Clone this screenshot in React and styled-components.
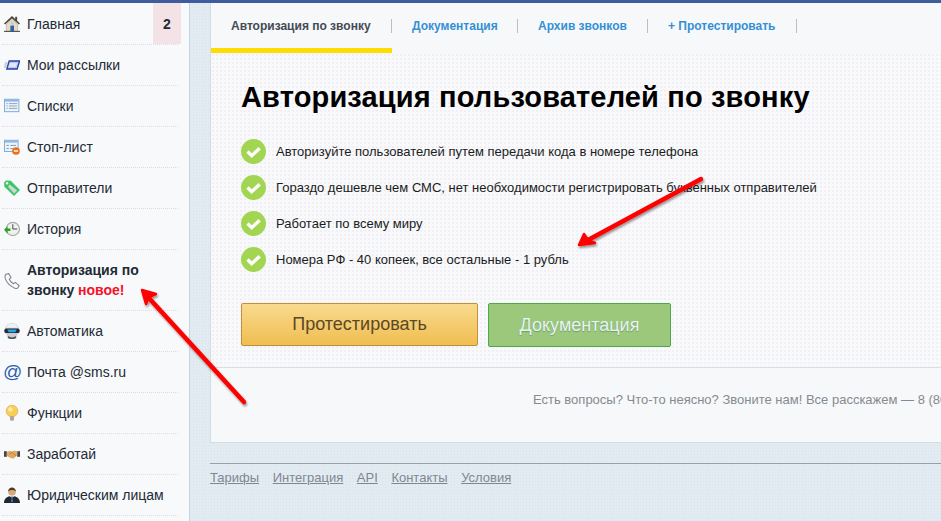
import React from "react";
import styled, { createGlobalStyle } from "styled-components";

const Global = createGlobalStyle`
  html, body { margin: 0; padding: 0; height: 100%; overflow: hidden; }
  body { font-family: "Liberation Sans", Arial, sans-serif; background: #e2eaf1; }
  #root { height: 100%; }
`;

const Page = styled.div`
  position: relative;
  width: 941px;
  height: 521px;
  overflow: hidden;
  border-top: 3px solid #3f5c9e;
  box-sizing: border-box;
  display: flex;
  background-color: #e3ebf2;
  background-image: radial-gradient(#d8e4ed 0.6px, transparent 0.7px);
  background-size: 3px 3px;
`;

const Sidebar = styled.nav`
  width: 190px;
  flex: none;
  box-sizing: border-box;
  padding: 1px 0 0 2px;
  background: #f8f9fb;
  border-right: 1px solid #c6d6e2;
`;

const MenuList = styled.ul`
  list-style: none;
  margin: 0;
  padding: 0;
  width: 176px;
`;

const MenuRow = styled.li`
  display: flex;
  align-items: ${(p) => (p.$tall ? "flex-start" : "center")};
  height: ${(p) => (p.$tall ? "60px" : "40px")};
  border-bottom: 1px dotted #e6d8ea;
  color: #222a35;
  font-size: 14px;
`;

const IconSlot = styled.span`
  width: 23px;
  padding-left: 2px;
  flex: none;
  display: flex;
  justify-content: flex-start;
  margin-top: ${(p) => (p.$tall ? "23px" : "0")};
`;

const AtGlyph = styled.span`
  color: #2a5fb0;
  font-size: 19px;
  line-height: 16px;
  margin-left: -1px;
`;

const Label = styled.span`
  line-height: 20px;
  font-weight: ${(p) => (p.$bold ? 700 : 400)};
  margin-top: ${(p) => (p.$bold ? "10px" : "0")};
`;

const NewMark = styled.span`
  color: #f5102a;
`;

const Badge = styled.span`
  margin-left: auto;
  width: 28px;
  height: 41px;
  margin-right: -3px;
  margin-top: -1px;
  align-self: flex-start;
  display: flex;
  align-items: center;
  justify-content: center;
  background: #f4e3e6;
  font-weight: 700;
  font-size: 14px;
`;

const Main = styled.main`
  flex: 1;
  min-width: 0;
  padding-left: 20px;
`;

const Panel = styled.section`
  height: 440px;
  box-sizing: border-box;
  background: #f7f8fa;
  border-left: 1px solid #d4dce3;
  border-bottom: 1px solid #d4dce3;
  display: flex;
  flex-direction: column;
`;

const Tabs = styled.div`
  height: 50px;
  flex: none;
  display: flex;
  align-items: flex-start;
  background: #f7f8fa;
`;

const Tab = styled.a`
  height: ${(p) => (p.$active ? "50px" : "45px")};
  box-sizing: border-box;
  padding: 16px 0 0 20px;
  width: ${(p) => p.$w}px;
  flex: none;
  font-size: 12px;
  line-height: 15px;
  font-weight: 700;
  color: ${(p) => (p.$active ? "#444b55" : "#3490d6")};
  border-bottom: ${(p) => (p.$active ? "5px solid #ffdc00" : "0")};
  position: relative;
  &::after {
    content: "";
    position: absolute;
    right: 0;
    top: 16px;
    height: 14px;
    width: 1px;
    background: #b9bfc4;
  }
`;

const Hero = styled.div`
  height: 315px;
  flex: none;
  box-sizing: border-box;
  padding: 24px 0 0 30px;
  border-bottom: 1px solid #dadfe3;
  background-color: #f8f9fb;
  background-image: radial-gradient(#f3edf3 0.7px, transparent 0.8px);
  background-size: 4px 4px;
`;

const Title = styled.h1`
  margin: 0;
  font-size: 29px;
  line-height: 40px;
  font-weight: 700;
  color: #000;
  letter-spacing: 0.15px;
  white-space: nowrap;
`;

const Points = styled.ul`
  list-style: none;
  margin: 22px 0 0;
  padding: 0;
  display: flex;
  flex-direction: column;
  gap: 11px;
`;

const Point = styled.li`
  display: flex;
  align-items: center;
  gap: 10px;
  height: 25px;
  font-size: 13px;
  color: #1a1d22;
  white-space: nowrap;
`;

const Buttons = styled.div`
  display: flex;
  gap: 10px;
  margin-top: 31px;
  align-items: flex-start;
`;

const Button = styled.a`
  box-sizing: border-box;
  width: ${(p) => p.$w}px;
  height: ${(p) => p.$h}px;
  display: flex;
  align-items: center;
  justify-content: center;
  font-size: 18px;
  border-radius: 2px;
`;

const OrangeButton = styled(Button)`
  color: #5c4824;
  background: linear-gradient(#f8da8f, #f0be50);
  border: 1px solid #c0903a;
`;

const GreenButton = styled(Button)`
  color: #e6f2f2;
  text-shadow: 0 1px 1px #6f9a6a;
  background: #9cc87c;
  border: 1px solid #4da94e;
`;

const Contact = styled.p`
  margin: 0;
  padding: 24px 0 0 322px;
  font-size: 13px;
  line-height: 15px;
  color: #858b90;
  white-space: nowrap;
`;

const Footer = styled.footer`
  margin-top: 20px;
  border-top: 1px solid #97a0a6;
  padding-top: 6px;
  display: flex;
  gap: 13.6px;
  font-size: 13px;
  line-height: 15px;
`;

const FootLink = styled.a`
  color: #7f8790;
  text-decoration: underline;
`;

const Arrows = styled.svg`
  position: absolute;
  left: 0;
  top: -3px;
  pointer-events: none;
`;

const Check = () => (
  <svg width="25" height="25" viewBox="0 0 25 25">
    <circle cx="12.5" cy="12.5" r="12.5" fill="#a2d552" />
    <path d="M6.5 12.5l4.2 4.2 8-7.5" fill="none" stroke="#fff" strokeWidth="3.4" />
  </svg>
);

const Ico = ({ children }) => (
  <svg width="16" height="16" viewBox="0 0 20 20">{children}</svg>
);

const HomeIcon = () => (
  <Ico>
    <path d="M10 0L0 9.5l1.4 1.2L10 3l8.600 7.700 1.400-1.200z" fill="#4f4338" />
    <rect x="14" y="1" width="2.400" height="5" fill="#4f4338" />
    <path d="M3 10.500L10 4.500l7 6v8.500H3z" fill="#e8dcc0" stroke="#8a8070" strokeWidth=".5" />
    <rect x="8" y="12" width="4.500" height="7" fill="#2a62b5" />
    <rect x="8.600" y="8" width="3.200" height="2.600" fill="#a8c8e8" />
    <rect x="0" y="18.600" width="20" height="1.400" fill="#555" />
  </Ico>
);

const MailIcon = () => (
  <Ico>
    <path d="M6.500 5h13l-3 10H3.500z" fill="#b8c8ea" stroke="#2a3fa8" strokeWidth="1.600" />
    <path d="M7.500 7.500h9l-1.800 5H5.800z" fill="#dfe7f6" />
    <path d="M1 7.500h3.500M0.500 10h3M0 12.500h2.500" stroke="#8f9db0" strokeWidth="1.100" />
  </Ico>
);

const ListIcon = () => (
  <Ico>
    <rect x="0.600" y="1.600" width="18" height="15.500" fill="#eef4fb" stroke="#7fa8d8" strokeWidth="1.200" />
    <rect x="1" y="2" width="17" height="2.500" fill="#8db7e6" />
    <path d="M3 7h1.500M3 10h1.500M3 13h1.500" stroke="#6f93c0" strokeWidth="1.200" />
    <path d="M6 7h10.500M6 10h10.500M6 13h10.500" stroke="#8aa0b8" strokeWidth="1.200" />
  </Ico>
);

const StopIcon = () => (
  <Ico>
    <rect x="0.600" y="1.600" width="17" height="14" fill="#eef4fb" stroke="#7fa8d8" strokeWidth="1.200" />
    <rect x="1" y="2" width="16" height="2.500" fill="#8db7e6" />
    <path d="M3 8h3M3 12h3M8 8h7M8 12h3" stroke="#7f93a8" strokeWidth="1.200" />
    <circle cx="15" cy="15" r="4.800" fill="#e8731f" />
    <rect x="12.400" y="14.100" width="5.200" height="1.800" fill="#fff" />
  </Ico>
);

const TagIcon = () => (
  <Ico>
    <path d="M0 3l2.500-2.500 6 .5L20 12.500 12.500 20 .5 8.500z" fill="#3cc76a" />
    <path d="M7 5.500l9.500 7.500-3.800 3.800L5 8.500z" fill="#cfd8d2" />
    <circle cx="3.800" cy="4" r="1.500" fill="#f0fff4" />
  </Ico>
);

const HistoryIcon = () => (
  <Ico>
    <circle cx="11" cy="10" r="8.300" fill="#eef1ec" stroke="#a8ada8" strokeWidth="1.500" />
    <path d="M11 4v6h5.500" fill="none" stroke="#333" strokeWidth="1.100" />
    <path d="M0 11l4.500-4.500V9.500h3.500v3H4.500v3.500z" fill="#2aa32a" />
  </Ico>
);

const PhoneIcon = () => (
  <Ico>
    <path
      d="M2.500 1.500L6 .8l2.800 5-2.200 2c1 2.500 2.700 4.200 5.200 5.700l2.200-1.700 5 4-1.800 2.700c-1 1-3 1.300-5.200-.2C6.500 15.500 2.800 11 1.500 6.500 1 4.500 1.500 2.500 2.500 1.500z"
      fill="none"
      stroke="#7f8488"
      strokeWidth="1.300"
    />
  </Ico>
);

const RobotIcon = () => (
  <Ico>
    <ellipse cx="10" cy="17.500" rx="5.500" ry="2.500" fill="#4f545b" />
    <circle cx="10" cy="9" r="9" fill="#c9ccd0" />
    <path d="M2.500 6C4 -1 16 -1 17.500 6z" fill="#f0f1f3" />
    <rect x="0.500" y="7" width="19" height="5.500" rx="2" fill="#222a3a" />
    <path d="M4 8h12l-2 3.500H6z" fill="#2aa3e8" />
  </Ico>
);

const BulbIcon = () => (
  <Ico>
    <circle cx="10" cy="7.500" r="7.300" fill="#f7cf58" stroke="#e9b96a" strokeWidth="1.200" />
    <circle cx="8" cy="5.500" r="2.800" fill="#fdeaa8" />
    <rect x="7.500" y="14.500" width="5" height="5" rx="1" fill="#8f8a80" />
    <path d="M7.500 16h5M7.500 17.800h5" stroke="#ddd" strokeWidth=".7" />
  </Ico>
);

const ShakeIcon = () => (
  <Ico>
    <rect x="0" y="6.500" width="3.500" height="7" fill="#444" />
    <rect x="16.500" y="6.500" width="3.500" height="7" fill="#444" />
    <path d="M3.500 7.500l4-1.500 2.500 1 3-1.500 3.500 1.500v5l-5 4-3-1-5-2.500z" fill="#dfa95f" />
    <path d="M7.500 9.500l3-1.200 4.500 4.200" fill="none" stroke="#a8743a" strokeWidth=".9" />
  </Ico>
);

const PersonIcon = () => (
  <Ico>
    <circle cx="10" cy="6" r="4.800" fill="#d7a97f" />
    <path d="M5.200 5.500C5.500 -.8 14.500 -.8 14.800 5.500 12 3.300 8 3.300 5.200 5.500z" fill="#4f3a28" />
    <path d="M0 20c0-5.500 3.500-7.500 7-8.500l3 2 3-2c3.500 1 7 3 7 8.500z" fill="#23272e" />
    <path d="M8.500 11.800h3l-1 2 .8 4-1.300 2-1.300-2 .8-4z" fill="#3b76c4" />
  </Ico>
);

const items = [
  { icon: <HomeIcon />, text: "Главная", badge: "2" },
  { icon: <MailIcon />, text: "Мои рассылки" },
  { icon: <ListIcon />, text: "Списки" },
  { icon: <StopIcon />, text: "Стоп-лист" },
  { icon: <TagIcon />, text: "Отправители" },
  { icon: <HistoryIcon />, text: "История" },
  { icon: <PhoneIcon />, text: "Авторизация по звонку", isNew: true },
  { icon: <RobotIcon />, text: "Автоматика" },
  { icon: <AtGlyph>@</AtGlyph>, text: "Почта @sms.ru" },
  { icon: <BulbIcon />, text: "Функции" },
  { icon: <ShakeIcon />, text: "Заработай" },
  { icon: <PersonIcon />, text: "Юридическим лицам" },
];

const tabs = [
  { t: "Авторизация по звонку", w: 181, active: true },
  { t: "Документация", w: 126 },
  { t: "Архив звонков", w: 130 },
  { t: "+ Протестировать", w: 149 },
];

const points = [
  "Авторизуйте пользователей путем передачи кода в номере телефона",
  "Гораздо дешевле чем СМС, нет необходимости регистрировать буквенных отправителей",
  "Работает по всему миру",
  "Номера РФ - 40 копеек, все остальные - 1 рубль",
];

const footer = ["Тарифы", "Интеграция", "API", "Контакты", "Условия"];

export default function App() {
  return (
    <>
      <Global />
      <Page>
        <Sidebar>
          <MenuList>
            {items.map((it) => (
              <MenuRow key={it.text} $tall={it.isNew}>
                <IconSlot $tall={it.isNew}>{it.icon}</IconSlot>
                <Label $bold={it.isNew}>
                  {it.text}
                  {it.isNew && (
                    <>
                      {" "}
                      <NewMark>новое!</NewMark>
                    </>
                  )}
                </Label>
                {it.badge && <Badge>{it.badge}</Badge>}
              </MenuRow>
            ))}
          </MenuList>
        </Sidebar>
        <Main>
          <Panel>
            <Tabs>
              {tabs.map((t) => (
                <Tab key={t.t} $active={t.active} $w={t.w}>
                  {t.t}
                </Tab>
              ))}
            </Tabs>
            <Hero>
              <Title>Авторизация пользователей по звонку</Title>
              <Points>
                {points.map((p) => (
                  <Point key={p}>
                    <Check />
                    {p}
                  </Point>
                ))}
              </Points>
              <Buttons>
                <OrangeButton $w={237} $h={43}>Протестировать</OrangeButton>
                <GreenButton $w={183} $h={44}>Документация</GreenButton>
              </Buttons>
            </Hero>
            <Contact>Есть вопросы? Что-то неясно? Звоните нам! Все расскажем — 8 (800) 555-32-14</Contact>
          </Panel>
          <Footer>
            {footer.map((f) => (
              <FootLink key={f}>{f}</FootLink>
            ))}
          </Footer>
        </Main>
        <Arrows width="941" height="521" viewBox="0 0 941 521">
          <defs>
            <filter id="sh" x="-20%" y="-20%" width="140%" height="140%">
              <feDropShadow dx="1" dy="2" stdDeviation="1.200" floodColor="#000" floodOpacity="0.4" />
            </filter>
          </defs>
          <g filter="url(#sh)" fill="#f00" stroke="#f00" strokeLinejoin="round">
            <path d="M244 402L148 297" strokeWidth="4.500" fill="none" strokeLinecap="round" />
            <path d="M142 290l14 4-7 3-3 7z" strokeWidth="2.500" />
            <path d="M701 179L588 240" strokeWidth="4.500" fill="none" strokeLinecap="round" />
            <path d="M579 245l5-11 4 6 7 3z" strokeWidth="2.500" />
          </g>
        </Arrows>
      </Page>
    </>
  );
}
